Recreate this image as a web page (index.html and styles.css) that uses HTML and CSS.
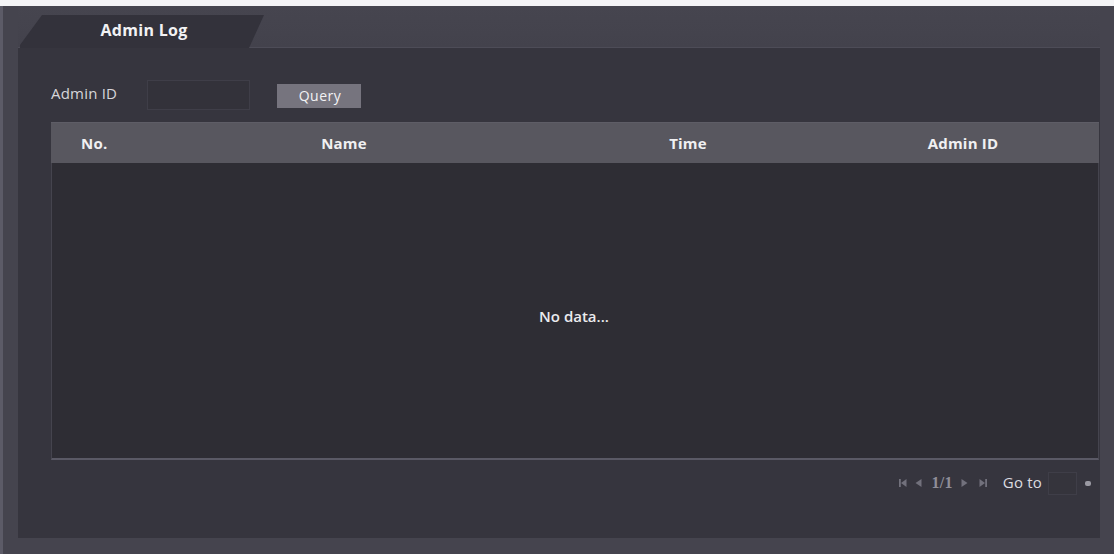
FILE: index.html
```html
<!DOCTYPE html>
<html>
<head>
<meta charset="utf-8">
<link rel="stylesheet" href="styles.css">
</head>
<body>
<div class="frame">
  <div class="tabbar">
    <div class="tab">Admin Log</div>
  </div>
  <div class="panel">
    <div class="filter">
      <span class="label">Admin ID</span>
      <span class="input"></span>
      <span class="btn">Query</span>
    </div>
    <div class="table">
      <div class="thead">
        <div class="th th-no">No.</div>
        <div class="th">Name</div>
        <div class="th">Time</div>
        <div class="th">Admin ID</div>
      </div>
      <div class="tbody">No data...</div>
    </div>
    <div class="pager">
      <svg class="pico first" width="8" height="10" viewBox="0 0 8 10"><rect x="0" y="1" width="1.8" height="8" fill="#72717c"/><path d="M7.5 1 L2 5 L7.5 9 Z" fill="#72717c"/></svg>
      <svg class="pico prev" width="7" height="10" viewBox="0 0 7 10"><path d="M6.5 1 L0.5 5 L6.5 9 Z" fill="#72717c"/></svg>
      <span class="pnum">1/1</span>
      <svg class="pico next" width="7" height="10" viewBox="0 0 7 10"><path d="M0.5 1 L6.5 5 L0.5 9 Z" fill="#72717c"/></svg>
      <svg class="pico last" width="8" height="10" viewBox="0 0 8 10"><path d="M0.5 1 L6 5 L0.5 9 Z" fill="#72717c"/><rect x="6.2" y="1" width="1.8" height="8" fill="#72717c"/></svg>
      <span class="goto">Go to</span>
      <span class="pinput"></span>
      <span class="dot"></span>
    </div>
  </div>
</div>
</body>
</html>
```
FILE: styles.css
```css
html, body {
  margin: 0;
  padding: 0;
  background: #f4f4f6;
}
body {
  width: 1114px;
  height: 554px;
  overflow: hidden;
  font-family: "Open Sans", "Noto Sans", sans-serif;
}
.frame {
  margin-top: 6px;
  height: 548px;
  background: #45444e;
  border-left: 3px solid #5c5b67;
  padding-left: 15px;
  padding-right: 14px;
  box-sizing: border-box;
  display: flex;
  flex-direction: column;
}
.tabbar {
  height: 42px;
  display: flex;
  align-items: flex-end;
  border-bottom: 1px solid #4d4c57;
  box-sizing: border-box;
  background: linear-gradient(#46454f, #43424c);
}
.tab {
  width: 244px;
  height: 33px;
  margin-left: 2px;
  margin-bottom: -1px;
  background: #33323b;
  clip-path: polygon(0 30px, 22px 0, 244px 0, 229px 100%, 0 100%);
  color: #f2f2f4;
  font-weight: 700;
  font-size: 16px;
  letter-spacing: 0.3px;
  display: flex;
  align-items: flex-start;
  justify-content: center;
  padding-top: 4px;
  padding-left: 4px;
  box-sizing: border-box;
}
.panel {
  height: 490px;
  background: #36353e;
  padding: 32px 1px 0 33px;
  box-sizing: border-box;
}
.filter {
  height: 30px;
  display: flex;
  align-items: center;
}
.label {
  color: #d6d6da;
  font-size: 15px;
  letter-spacing: 0.2px;
  width: 96px;
  margin-top: -4px;
}
.input {
  width: 103px;
  height: 30px;
  box-sizing: border-box;
  border: 1px solid #3f3e48;
  background: #33323a;
}
.btn {
  margin-left: 27px;
  width: 84px;
  height: 24px;
  margin-top: 1px;
  background: #76747e;
  color: #f2f2f4;
  font-size: 14px;
  letter-spacing: 0.5px;
  display: flex;
  align-items: center;
  justify-content: center;
  padding-left: 2px;
  box-sizing: border-box;
}
.table {
  margin-top: 12px;
  width: 1048px;
}
.thead {
  height: 41px;
  background: #58575f;
  border-top: 1px solid #5e5d66;
  box-sizing: border-box;
  display: grid;
  grid-template-columns: 88px 410px 278px 272px;
  align-items: center;
}
.th {
  color: #f0f0f2;
  font-size: 15px;
  font-weight: 700;
  text-align: center;
  letter-spacing: 0.2px;
}
.th-no {
  text-align: left;
  padding-left: 30px;
}
.tbody {
  height: 297px;
  background: #2e2d34;
  border: 1px solid #45444e;
  border-bottom: 2px solid #5a5965;
  border-top: none;
  box-sizing: border-box;
  display: flex;
  align-items: center;
  justify-content: center;
  color: #ebebee;
  font-size: 15px;
  font-weight: 600;
  letter-spacing: 0;
  padding-right: 2px;
  padding-top: 10px;
}
.pager {
  width: 1048px;
  display: flex;
  align-items: center;
  justify-content: flex-end;
  margin-top: 11px;
  height: 24px;
}
.first { margin-right: 8px; }
.prev { margin-right: 9px; }
.next { margin-right: 11px; }
.last { margin-right: 16px; }
.pnum {
  color: #8f8e98;
  font-size: 16px;
  letter-spacing: 0.3px;
  margin-right: 8px;
  font-family: "Liberation Serif", serif;
  font-weight: 700;
}
.goto {
  color: #dcdce0;
  font-size: 15px;
  letter-spacing: 0.2px;
  margin-right: 6px;
  margin-top: -2px;
}
.pinput {
  width: 29px;
  height: 23px;
  border: 1px solid #3f3e48;
  background: #35343c;
  box-sizing: border-box;
}
.dot {
  width: 6px;
  height: 5px;
  border-radius: 2px;
  background: #9a99a2;
  margin-left: 8px;
  margin-right: 8px;
}
```
